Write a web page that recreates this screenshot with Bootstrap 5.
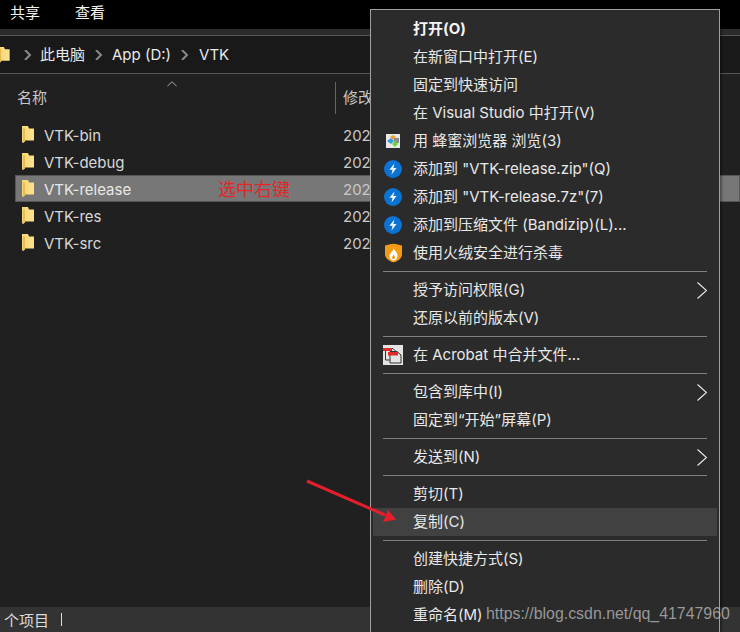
<!DOCTYPE html>
<html lang="en">
<head>
  <meta charset="UTF-8">
  <meta name="viewport" content="width=device-width, initial-scale=1.0">
  <title>VTK</title>
  <link href="https://cdn.jsdelivr.net/npm/bootstrap@5.3.3/dist/css/bootstrap.min.css" rel="stylesheet">
  <style>
    html, body { height: 100%; }
    body {
      background: #202020;
      color: #dcdcdc;
      font-family: Inter, "Noto Sans CJK SC", sans-serif;
      font-size: 15px;
      line-height: 20px;
      overflow: hidden;
    }
    #explorer { height: 632px; width: 740px; position: relative; overflow: hidden; }
    #ribbon { background: #000; height: 29px; color: #f4f4f4; padding: 0 0 3px 10px; gap: 35px; }
    #ribbon-gap { height: 6px; background: #2b2b2b; }
    #address { height: 39px; background: #191919; border-top: 1px solid #555; border-bottom: 1px solid #555; margin-bottom: 0; padding: 0; flex-wrap: nowrap; color: #e8e8e8; }
    .crumb-sep { width: 28px; flex: none; }
    .crumb-sep.first { width: 16px; margin-left: 14px; }
    .crumb-sep.tight { width: 27px; }
    #head-row { height: 47px; padding: 1px 0 0 17px; color: #c8c8c8; position: relative; }
    .sort-arrow { position: absolute; left: 167px; top: 7px; }
    #col-line { position: absolute; left: 335px; top: 8px; height: 32px; width: 1px; background: #666; }
    .date-col { position: absolute; white-space: nowrap; color: #c8c8c8; }
    #head-row .date-col { left: 343px; }
    .file-row .date-col { left: 328px; }
    .file-row { height: 27px; margin-left: 15px; padding: 2px 0 0 7px; position: relative; color: #d8d8d8; gap: 10px; }
    .file-row svg { margin-top: -2px; }
    .file-row.picked { background: #777; outline: 1px solid #555; outline-offset: -1px; color: #e8e8e8; }
    .file-note { position: absolute; left: 203px; color: #e3262b; font-size: 18px; }
    #status { height: 25px; background: #333; padding: 2px 0 0 4px; color: #dcdcdc; gap: 7px; }
    #status i { display: block; width: 1px; height: 13px; background: #ddd; margin: -2px 0 0 5px; }

    #ctx-menu {
      top: 9px; left: 370px; width: 350px; height: 640px;
      background: #2b2b2b; border: 1px solid #a0a0a0; border-radius: 0;
      padding: 5px 2px; margin: 0; box-shadow: 2px 0 2px rgba(0,0,0,.35);
    }
    #ctx-menu .dropdown-item {
      height: 28px; padding: 0 0 0 40px; color: #e8e8e8; position: relative;
      display: flex; align-items: center; font-size: 15px; white-space: nowrap;
    }
    #ctx-menu .dropdown-item.hot { background: #414141; }
    #ctx-menu .dropdown-item.strong { font-weight: 700; color: #f4f4f4; }
    #ctx-menu .dropdown-divider { margin: 4px 10px; height: 1px; border: 0; background: #808080; opacity: 1; }
    .menu-ico { position: absolute; left: 11px; top: 50%; transform: translateY(-50%); display: block; }
    .menu-ico.ico-honey { left: 13px; }
    .menu-ico.ico-shield { left: 12px; }
    .menu-ico.ico-acro { left: 10px; }
    .menu-more { position: absolute; right: 10px; top: 6px; }
    #watermark {
      position: absolute; left: 486px; top: 604px; font-family: "Liberation Sans", sans-serif; z-index: 1001;
      font-size: 15.9px; color: rgba(190,190,190,.75); white-space: nowrap;
    }
    #red-arrow { position: absolute; left: 300px; top: 475px; z-index: 1001; }
  </style>
</head>
<body>
  <svg width="0" height="0" class="position-absolute">
    <defs>
      <linearGradient id="fold" x1="0" x2="1"><stop offset="0" stop-color="#f7d774"/><stop offset="1" stop-color="#fde28f"/></linearGradient>
      <symbol id="folder" viewBox="0 0 12 17">
        <path d="M0 0H6L7 2.500H12V14.500H3V15.500L1 17L0 16Z" fill="url(#fold)"/>
        <path d="M3 2.500V15L1 17V2Z" fill="#e8bd58"/>
      </symbol>
      <symbol id="bandizip" viewBox="0 0 18 18">
        <circle cx="9" cy="9" r="9" fill="#0b73d3"/>
        <path d="M10.500 3.500L5.500 9.800H8.600L7.500 14.500L12.500 8H9.300Z" fill="#fff"/>
      </symbol>
      <symbol id="more" viewBox="0 0 10 17">
        <path d="M.5 .5L9.500 8.500L.5 16.500" fill="none" stroke="#e6eef5" stroke-width="1.100"/>
      </symbol>
    </defs>
  </svg>

  <div id="explorer" class="d-flex flex-column">
    <div id="ribbon" class="d-flex align-items-center"><span>共享</span><span>查看</span></div>
    <div id="ribbon-gap"></div>

    <div id="address" class="breadcrumb d-flex align-items-center">
      <svg width="10" height="16" class="flex-shrink-0"><use href="#folder" x="-2" width="12" height="16"/></svg>
      <svg class="crumb-sep first" height="10" viewBox="0 0 16 10"><path d="M1 0L6 5L1 10" fill="none" stroke="#8a8a8a" stroke-width="2"/></svg>
      <span>此电脑</span>
      <svg class="crumb-sep tight" height="10" viewBox="0 0 27 10"><path d="M11 0L16 5L11 10" fill="none" stroke="#8a8a8a" stroke-width="2"/></svg>
      <span>App (D:)</span>
      <svg class="crumb-sep" height="10" viewBox="0 0 28 10"><path d="M11 0L16 5L11 10" fill="none" stroke="#8a8a8a" stroke-width="2"/></svg>
      <span>VTK</span>
    </div>

    <div id="head-row" class="d-flex align-items-center">
      <span>名称</span>
      <svg class="sort-arrow" width="10" height="6"><path d="M.5 5L5 .8L9.500 5" fill="none" stroke="#aaa"/></svg>
      <span id="col-line"></span>
      <span class="date-col">修改</span>
    </div>

    <div class="flex-grow-1">
      <div class="file-row d-flex align-items-center"><svg width="12" height="17"><use href="#folder"/></svg><span>VTK-bin</span><span class="date-col">202</span></div>
      <div class="file-row d-flex align-items-center"><svg width="12" height="17"><use href="#folder"/></svg><span>VTK-debug</span><span class="date-col">202</span></div>
      <div class="file-row picked d-flex align-items-center"><svg width="12" height="17"><use href="#folder"/></svg><span>VTK-release</span><span class="file-note">选中右键</span><span class="date-col">202</span></div>
      <div class="file-row d-flex align-items-center"><svg width="12" height="17"><use href="#folder"/></svg><span>VTK-res</span><span class="date-col">202</span></div>
      <div class="file-row d-flex align-items-center"><svg width="12" height="17"><use href="#folder"/></svg><span>VTK-src</span><span class="date-col">202</span></div>
    </div>

    <div id="status" class="d-flex align-items-center"><span>个项目</span><i></i></div>

    <ul id="ctx-menu" class="dropdown-menu show">
      <li><a class="dropdown-item strong" href="#">打开(O)</a></li>
      <li><a class="dropdown-item" href="#">在新窗口中打开(E)</a></li>
      <li><a class="dropdown-item" href="#">固定到快速访问</a></li>
      <li><a class="dropdown-item" href="#">在 Visual Studio 中打开(V)</a></li>
      <li><a class="dropdown-item" href="#">
        <svg class="menu-ico ico-honey" width="14" height="14" viewBox="0 0 14 14">
          <rect width="14" height="14" fill="#e8e8e8"/>
          <path d="M1 7L5 4L8 7L5 10Z" fill="#2f9fdc"/><path d="M4 3L7 1L10 3L7 6Z" fill="#f0a030"/>
          <path d="M8 4H13V9H8Z" fill="#8c8c8c"/><path d="M6 10L9 7L12 10L9 13Z" fill="#6fd23c"/>
        </svg>用 蜂蜜浏览器 浏览(3)</a></li>
      <li><a class="dropdown-item" href="#"><svg class="menu-ico" width="18" height="18"><use href="#bandizip"/></svg>添加到 "VTK-release.zip"(Q)</a></li>
      <li><a class="dropdown-item" href="#"><svg class="menu-ico" width="18" height="18"><use href="#bandizip"/></svg>添加到 "VTK-release.7z"(7)</a></li>
      <li><a class="dropdown-item" href="#"><svg class="menu-ico" width="18" height="18"><use href="#bandizip"/></svg>添加到压缩文件 (Bandizip)(L)...</a></li>
      <li><a class="dropdown-item" href="#">
        <svg class="menu-ico ico-shield" width="17" height="19" viewBox="0 0 17 19">
          <path d="M0 2L8.500 0L17 2V11C17 15 12 18 8.500 19C5 18 0 15 0 11Z" fill="#f59a13"/>
          <path d="M8.500 4C9 7 12.500 8.500 12.500 12C12.500 15 10.500 17 8.500 17C6 17 4.500 15 4.500 12.500C4.500 10.500 6 10 6.500 8C7.500 8.500 8 7 8.500 4Z" fill="#fff"/>
          <path d="M8.500 11C9.500 12.500 10 13 10 14C10 15 9 15.500 8.500 15.500C7.500 15.500 7 14.800 7 14C7 13 8 12.500 8.500 11Z" fill="#f59a13"/>
        </svg>使用火绒安全进行杀毒</a></li>
      <li><hr class="dropdown-divider"></li>
      <li><a class="dropdown-item" href="#">授予访问权限(G)<svg class="menu-more" width="10" height="17"><use href="#more"/></svg></a></li>
      <li><a class="dropdown-item" href="#">还原以前的版本(V)</a></li>
      <li><hr class="dropdown-divider"></li>
      <li><a class="dropdown-item" href="#">
        <svg class="menu-ico ico-acro" width="20" height="20" viewBox="0 0 20 20">
          <rect width="20" height="20" fill="#e4e4e4"/>
          <path d="M2.500 3.500H10L13 6.500V15H2.500Z" fill="#e4e4e4" stroke="#333"/>
          <path d="M7 6.500H14L18 10V18H7Z" fill="#e4e4e4" stroke="#333"/>
          <rect y="3" width="9" height="3" fill="#e02b2b"/><rect x="5" y="7" width="10" height="3.500" fill="#e02b2b"/>
        </svg>在 Acrobat 中合并文件...</a></li>
      <li><hr class="dropdown-divider"></li>
      <li><a class="dropdown-item" href="#">包含到库中(I)<svg class="menu-more" width="10" height="17"><use href="#more"/></svg></a></li>
      <li><a class="dropdown-item" href="#">固定到“开始”屏幕(P)</a></li>
      <li><hr class="dropdown-divider"></li>
      <li><a class="dropdown-item" href="#">发送到(N)<svg class="menu-more" width="10" height="17"><use href="#more"/></svg></a></li>
      <li><hr class="dropdown-divider"></li>
      <li><a class="dropdown-item" href="#">剪切(T)</a></li>
      <li><a class="dropdown-item hot" href="#">复制(C)</a></li>
      <li><hr class="dropdown-divider"></li>
      <li><a class="dropdown-item" href="#">创建快捷方式(S)</a></li>
      <li><a class="dropdown-item" href="#">删除(D)</a></li>
      <li><a class="dropdown-item" href="#">重命名(M)</a></li>
    </ul>

    <svg id="red-arrow" width="100" height="55" viewBox="0 0 100 55">
      <path d="M7 6L85 40" stroke="#e3202a" stroke-width="3" fill="none"/>
      <path d="M96 44.500L88 35L83 47Z" fill="#e3202a"/>
    </svg>
    <span id="watermark">https://blog.csdn.net/qq_41747960</span>
  </div>

  <script src="https://cdn.jsdelivr.net/npm/bootstrap@5.3.3/dist/js/bootstrap.bundle.min.js"></script>
</body>
</html>
